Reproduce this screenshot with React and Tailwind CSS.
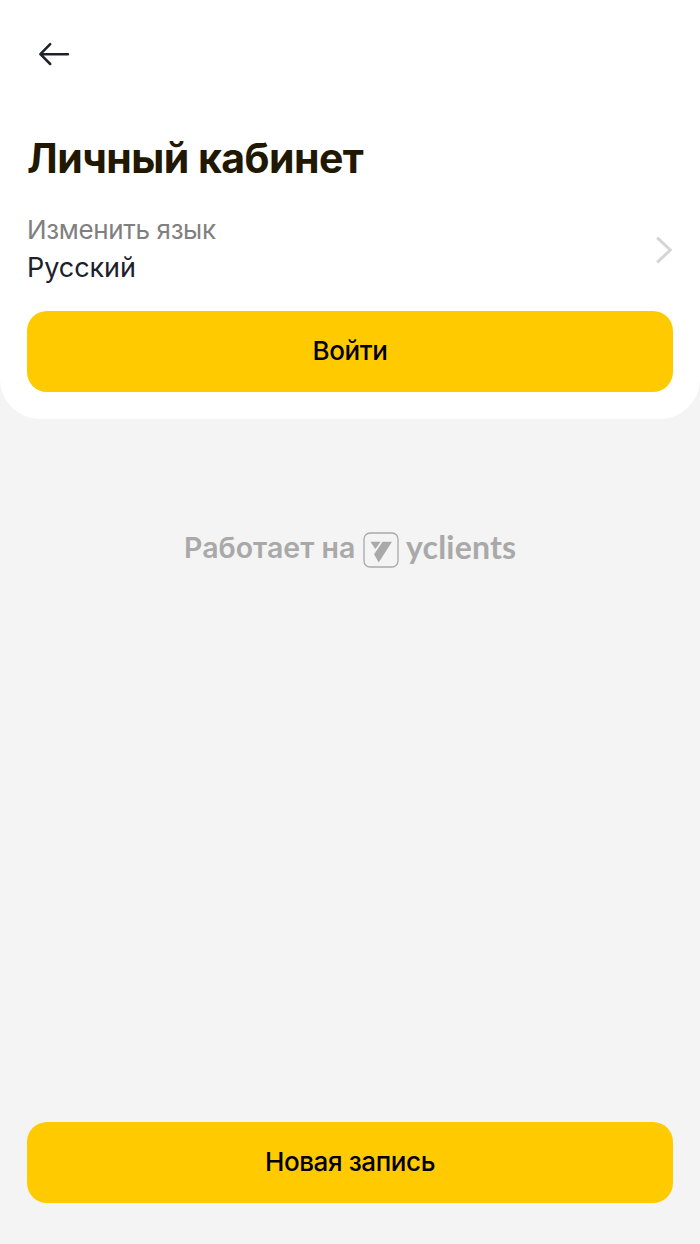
function BackIcon() {
  return (
    <svg width="32" height="24" viewBox="0 0 32 24" fill="none" className="block">
      <path
        d="M12.2 2.2 2.4 12.2l9.8 9.8M2.4 12.2h27.5"
        stroke="#20202c"
        strokeWidth="2.5"
        strokeLinecap="round"
        strokeLinejoin="round"
      />
    </svg>
  );
}

function ChevronIcon() {
  return (
    <svg width="18" height="28" viewBox="0 0 18 28" fill="none" className="block mb-px">
      <path d="M2.2 1.6 15.3 14 2.2 26.4" stroke="#d5d5d5" strokeWidth="3" />
    </svg>
  );
}

function LogoMark() {
  return (
    <svg width="36" height="36" viewBox="0 0 36 36" fill="none" className="block">
      <rect x="1" y="1" width="34" height="34" rx="6" stroke="#a9a9a9" strokeWidth="1.3" />
      <path d="M7.4 9.8h10.2l-5.2 7.2z" fill="#a9a9a9" />
      <path d="M19.6 9.8h9.4L15.7 30.4l-4.6-8.2z" fill="#a9a9a9" />
    </svg>
  );
}

function Button({ children }) {
  return (
    <button className="w-full h-[81px] pb-[2px] rounded-[20px] bg-[#ffcb00] text-black text-[26px] font-medium tracking-[-0.4px]">
      {children}
    </button>
  );
}

export default function App() {
  return (
    <div className="w-full h-[1244px] flex flex-col bg-[#f4f4f4] font-['Inter',sans-serif]">
      {/* Account card */}
      <div className="h-[419px] shrink-0 bg-white rounded-b-[40px] px-[27px] pt-[42px]">
        <button className="block ml-[11px]" aria-label="Назад">
          <BackIcon />
        </button>

        <h1 className="mt-[67px] h-[50px] leading-[50px] text-[41px] font-bold tracking-[-0.55px] text-[#201800] whitespace-nowrap">
          Личный кабинет
        </h1>

        <div className="mt-[27px] h-[81px] flex items-center justify-between">
          <div className="pb-[4px]">
            <p className="text-[26px] leading-[38px] tracking-[-0.35px] text-[#808080]">Изменить язык</p>
            <p className="text-[27px] leading-[38px] tracking-[-0.05px] text-[#20202c]">Русский</p>
          </div>
          <ChevronIcon />
        </div>

        <div className="mt-[20px]">
          <Button>Войти</Button>
        </div>
      </div>

      {/* Powered by */}
      <div className="mt-[113px] h-[36px] pl-[184px] flex items-center text-[#a9a9a9]">
        <span className="w-[179px] text-[28.5px] leading-[36px] font-semibold -mt-1 whitespace-nowrap">
          Работает на
        </span>
        <LogoMark />
        <span className="ml-[7px] font-['Lato',sans-serif] text-[32px] leading-[36px] font-bold tracking-[0.2px] -mt-[6px]">
          yclients
        </span>
      </div>

      <div className="mt-auto px-[27px] pb-[41px]">
        <Button>Новая запись</Button>
      </div>
    </div>
  );
}
